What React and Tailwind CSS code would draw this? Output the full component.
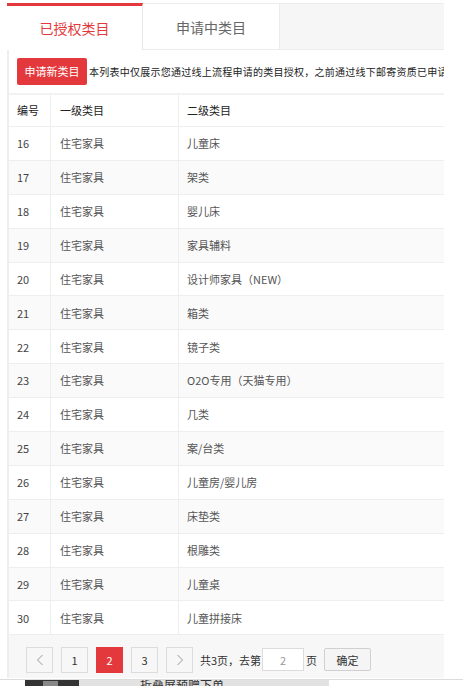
import React from "react";

const rows = [
  [16, "儿童床"],
  [17, "架类"],
  [18, "婴儿床"],
  [19, "家具辅料"],
  [20, "设计师家具（NEW）"],
  [21, "箱类"],
  [22, "镜子类"],
  [23, "O2O专用（天猫专用）"],
  [24, "几类"],
  [25, "案/台类"],
  [26, "儿童房/婴儿房"],
  [27, "床垫类"],
  [28, "根雕类"],
  [29, "儿童桌"],
  [30, "儿童拼接床"],
];

function Chevron({ dir }) {
  return (
    <svg width="8" height="12" viewBox="0 0 8 12" fill="none">
      <polyline
        points={dir === "left" ? "6.5,1 1.5,6 6.5,11" : "1.5,1 6.5,6 1.5,11"}
        stroke="#999"
        strokeWidth="1"
      />
    </svg>
  );
}

function PageButton({ children, active = false }) {
  return (
    <button
      className={
        active
          ? "flex h-[26px] w-[27px] items-center justify-center border border-[#e4393c] bg-[#e4393c] text-[11px] text-white"
          : "flex h-[26px] w-[27px] items-center justify-center border border-[#dcdcdc] bg-[#f7f7f7] text-[11px] text-[#333]"
      }
    >
      {children}
    </button>
  );
}

export default function App() {
  return (
    <div className="h-[686px] w-[463px] overflow-hidden bg-white font-['Noto_Sans_CJK_SC','Noto_Sans',sans-serif]">
      <div className="ml-[7px] w-[437px] pt-[3px]">
        {/* Tabs */}
        <div className="flex h-[47px]">
          <div className="flex w-[136px] items-center justify-center border-r border-t-[3px] border-r-[#e8e8e8] border-t-[#e4393c] bg-white text-[14px] text-[#e4393c]">
            已授权类目
          </div>
          <div className="flex w-[136px] items-center justify-center border-b border-t border-[#ececec] bg-white pt-[2px] text-[14px] text-[#666]">
            申请中类目
          </div>
          <div className="flex-1 border-b border-l border-t border-[#ececec] bg-[#f6f6f6]" />
        </div>

        {/* Panel */}
        <div className="border-l-2 border-[#eeeeee]">
          <div className="flex h-[45px] items-center overflow-hidden border-b-2 border-[#f2f2f2] pl-[8px]">
            <button className="h-[27px] w-[70px] shrink-0 rounded-[2px] bg-[#e4393c] text-[11px] text-white">
              申请新类目
            </button>
            <p className="ml-[2px] whitespace-nowrap text-[10px] tracking-[0.25px] text-[#222]">
              本列表中仅展示您通过线上流程申请的类目授权，之前通过线下邮寄资质已申请的类目请联系小二查询
            </p>
          </div>

          {/* Table */}
          <div className="text-[11px]">
            <div className="flex h-[32px] border-b border-[#eeeeee] text-[#222]">
              <div className="flex w-[42px] items-center border-r border-[#eeeeee] pl-[8px]">编号</div>
              <div className="flex w-[128px] items-center border-r border-[#eeeeee] pl-[9px]">一级类目</div>
              <div className="flex flex-1 items-center pl-[8px]">二级类目</div>
            </div>
            {rows.map(([id, name], i) => (
              <div
                key={id}
                className={
                  i % 2 === 1
                    ? "flex h-[33.9px] border-b border-[#eeeeee] bg-[#fafafa]"
                    : "flex h-[33.9px] border-b border-[#eeeeee] bg-white"
                }
              >
                <div className="flex w-[42px] items-center border-r border-[#eeeeee] pl-[8px] text-[#444]">{id}</div>
                <div className="flex w-[128px] items-center border-r border-[#eeeeee] pl-[9px] text-[#555]">住宅家具</div>
                <div className="flex flex-1 items-center pl-[8px] text-[#555]">{name}</div>
              </div>
            ))}
          </div>

          {/* Pagination */}
          <div className="flex h-[43px] items-start bg-[#f7f7f7] pl-[17px] pt-[12px] text-[11px] text-[#333]">
            <PageButton>
              <Chevron dir="left" />
            </PageButton>
            <div className="ml-[8px]">
              <PageButton>1</PageButton>
            </div>
            <div className="ml-[8px]">
              <PageButton active>2</PageButton>
            </div>
            <div className="ml-[8px]">
              <PageButton>3</PageButton>
            </div>
            <div className="ml-[8px]">
              <PageButton>
                <Chevron dir="right" />
              </PageButton>
            </div>
            <span className="ml-[7px] flex h-[26px] items-center">共3页，去第</span>
            <div className="ml-[1px] mt-[1px] flex h-[23px] w-[42px] items-center justify-center border border-[#dcdcdc] bg-white text-[#999]">
              2
            </div>
            <span className="ml-[2px] flex h-[26px] items-center">页</span>
            <button className="ml-[7px] mt-[1px] h-[23px] w-[47px] rounded-[2px] border border-[#d0d0d0] bg-[#f5f5f5] text-[11px] text-[#333]">
              确定
            </button>
          </div>
        </div>
      </div>

      {/* next section peeking in */}
      <div className="mt-[1px] h-[10px] overflow-hidden border-t border-[#dcdcdc]">
        <div className="ml-[25px] flex h-full">
          <div className="flex h-full w-[54px] bg-[#333]">
            <div className="ml-[18px] mt-[1px] h-full w-[15px] bg-[#888]" />
          </div>
          <div className="h-full w-[250px] bg-[#e2e2e2] pl-[61px] text-[12px] leading-[10px] text-[#333]">
            折叠屏预赠下单
          </div>
        </div>
      </div>
    </div>
  );
}
